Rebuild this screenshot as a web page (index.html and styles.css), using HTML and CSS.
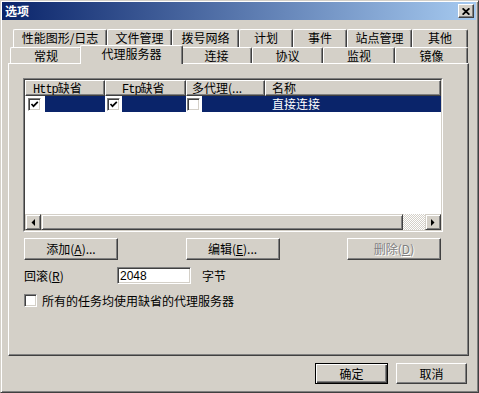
FILE: index.html
```html
<!DOCTYPE html>
<html lang="zh-CN">
<head>
    <meta charset="UTF-8">
    <title>选项</title>
    <link rel="stylesheet" href="styles.css">
</head>
<body>
    <div class="window">
        <div class="titlebar">
            <span class="title">选项</span>
            <span class="close-btn">
                <svg width="8" height="7" viewBox="0 0 8 7"><path d="M0.6 0.3 L7.4 6.7 M7.4 0.3 L0.6 6.7" stroke="#000" stroke-width="1.8"/></svg>
            </span>
        </div>

        <div class="tabs">
            <div class="tab-row back">
                <div class="tab w94">性能图形/日志</div>
                <div class="tab w65">文件管理</div>
                <div class="tab w67">拨号网络</div>
                <div class="tab w54">计划</div>
                <div class="tab w54">事件</div>
                <div class="tab w65">站点管理</div>
                <div class="tab w56">其他</div>
            </div>
            <div class="tab-row front">
                <div class="tab w72">常规</div>
                <div class="tab active">代理服务器</div>
                <div class="tab w71">连接</div>
                <div class="tab w71">协议</div>
                <div class="tab w72">监视</div>
                <div class="tab w73">镜像</div>
            </div>
        </div>

        <div class="panel">
            <div class="listview">
                <div class="listview-inner">
                    <div class="lv-header">
                        <div class="lv-col c1"><span class="lat">Http</span>缺省</div>
                        <div class="lv-col c2"><span class="lat">Ftp</span>缺省</div>
                        <div class="lv-col c3">多代理(...</div>
                        <div class="lv-col c4">名称</div>
                    </div>
                    <div class="lv-row">
                        <div class="lv-cell c1">
                            <span class="slot s1"><span class="checkbox checked"><svg width="9" height="9" viewBox="0 0 9 9"><polyline points="1.5,4 3.5,6.2 7.8,1.8" fill="none" stroke="#000" stroke-width="1.7"/></svg></span></span>
                            <span class="sel"></span>
                        </div>
                        <div class="lv-cell c2">
                            <span class="slot s2"><span class="checkbox checked"><svg width="9" height="9" viewBox="0 0 9 9"><polyline points="1.5,4 3.5,6.2 7.8,1.8" fill="none" stroke="#000" stroke-width="1.7"/></svg></span></span>
                            <span class="sel"></span>
                        </div>
                        <div class="lv-cell c3">
                            <span class="slot s3"><span class="checkbox"></span></span>
                            <span class="sel"></span>
                        </div>
                        <div class="lv-cell c4">
                            <span class="sel name">直接连接</span>
                        </div>
                    </div>
                    <div class="lv-body"></div>
                    <div class="hscroll">
                        <div class="sb-btn">
                            <svg width="4" height="7" viewBox="0 0 4 7"><polygon points="4,0 4,7 0.5,3.5" fill="#000"/></svg>
                        </div>
                        <div class="sb-thumb"></div>
                        <div class="sb-track"></div>
                        <div class="sb-btn">
                            <svg width="4" height="7" viewBox="0 0 4 7"><polygon points="0,0 0,7 3.5,3.5" fill="#000"/></svg>
                        </div>
                    </div>
                </div>
            </div>

            <div class="btn-row">
                <button class="btn wide">添加(<u>A</u>)...</button>
                <button class="btn wide">编辑(<u>E</u>)...</button>
                <button class="btn wide disabled">删除(<u>D</u>)</button>
            </div>

            <div class="field-row">
                <span class="field-label">回滚(<u>R</u>)</span>
                <input class="field-input" type="text" value="2048">
                <span class="field-unit">字节</span>
            </div>

            <div class="check-row">
                <span class="checkbox"></span>
                <span>所有的任务均使用缺省的代理服务器</span>
            </div>
        </div>

        <div class="footer">
            <button class="btn default">确定</button>
            <button class="btn cancel">取消</button>
        </div>
    </div>
</body>
</html>
```

FILE: styles.css
```css
body {
    margin: 0;
    background: #d4d0c8;
    font-family: "Noto Sans CJK SC", "Noto Sans", sans-serif;
    font-size: 12px;
    color: #000;
}
.window {
    width: 479px;
    height: 393px;
    box-sizing: border-box;
    background: #d4d0c8;
    border: 1px solid;
    border-color: #d4d0c8 #404040 #404040 #d4d0c8;
    box-shadow: inset 1px 1px #fff, inset -1px -1px #808080;
    padding: 1px 2px 0 1px;
    display: flex;
    flex-direction: column;
}
.titlebar {
    height: 18px;
    flex: none;
    display: flex;
    align-items: center;
    justify-content: space-between;
    padding: 0 2px 0 3px;
    background: linear-gradient(to right, #0a246a, #a6caf0);
}
.title {
    color: #fff;
    font-weight: bold;
    line-height: 18px;
}
.close-btn {
    width: 16px;
    height: 14px;
    box-sizing: border-box;
    background: #d4d0c8;
    border: 1px solid;
    border-color: #fff #404040 #404040 #fff;
    box-shadow: inset -1px -1px #808080;
    display: flex;
    align-items: center;
    justify-content: center;
}

/* tabs */
.tabs {
    margin: 9px 0 0 6px;
    flex: none;
}
.tab-row {
    display: flex;
    align-items: flex-start;
}
.tab-row.back {
    height: 18px;
    padding-left: 5px;
}
.tab-row.front {
    height: 16px;
    padding-left: 2px;
}
.tab {
    box-sizing: border-box;
    height: 100%;
    background: #d4d0c8;
    border-top: 1px solid #fff;
    border-left: 1px solid #fff;
    border-right: 1px solid #404040;
    box-shadow: inset -1px 0 #808080;
    border-radius: 2px 2px 0 0;
    text-align: center;
    white-space: nowrap;
    line-height: 15px;
}
.front .tab.active {
    position: relative;
    z-index: 1;
    width: 103px;
    height: 19px;
    margin: -2px -2px 0;
    padding: 1px 0 4px;
    line-height: 13px;
}
.w54 { width: 54px; }
.w56 { width: 56px; }
.w65 { width: 65px; }
.w67 { width: 67px; }
.w71 { width: 71px; }
.w72 { width: 72px; }
.w73 { width: 73px; }
.w94 { width: 94px; }

/* panel */
.panel {
    width: 461px;
    height: 293px;
    flex: none;
    box-sizing: border-box;
    margin-left: 6px;
    border: 1px solid;
    border-color: #fff #404040 #404040 #fff;
    box-shadow: inset -1px -1px #808080;
    padding: 14px 0 0 14px;
}
.listview {
    width: 420px;
    height: 154px;
    box-sizing: border-box;
    border: 1px solid;
    border-color: #808080 #fff #fff #808080;
}
.listview-inner {
    height: 100%;
    box-sizing: border-box;
    border: 1px solid;
    border-color: #404040 #d4d0c8 #d4d0c8 #404040;
    background: #fff;
    display: flex;
    flex-direction: column;
}
.lv-header,
.lv-row {
    display: flex;
    height: 16px;
    flex: none;
}
.lv-col {
    box-sizing: border-box;
    height: 16px;
    background: #d4d0c8;
    border: 1px solid;
    border-color: #fff #404040 #404040 #fff;
    box-shadow: inset -1px -1px #808080;
    line-height: 14px;
    white-space: nowrap;
    overflow: hidden;
}
.lat {
    font-family: "Liberation Mono", monospace;
    letter-spacing: -1px;
}
.c1 { width: 80px; }
.c2 { width: 81px; }
.c3 { width: 79px; }
.c4 { flex: 1; }
.lv-col.c1 { padding-left: 7px; }
.lv-col.c2 { padding-left: 16px; }
.lv-col.c3 { padding-left: 5px; }
.lv-col.c4 { padding-left: 6px; }
.lv-cell {
    display: flex;
    height: 16px;
}
.slot {
    display: flex;
    align-items: center;
    background: #fff;
}
.s1 { width: 20px; padding-left: 3px; box-sizing: border-box; }
.s2 { width: 17px; padding-left: 2px; box-sizing: border-box; }
.s3 { width: 16px; padding-left: 1px; box-sizing: border-box; }
.sel {
    flex: 1;
    background: #0a246a;
}
.sel.name {
    color: #fff;
    padding-left: 7px;
    line-height: 16px;
}
.lv-body {
    flex: 1;
}
.hscroll {
    display: flex;
    height: 16px;
    flex: none;
}
.sb-btn,
.sb-thumb {
    box-sizing: border-box;
    height: 16px;
    background: #d4d0c8;
    border: 1px solid;
    border-color: #d4d0c8 #404040 #404040 #d4d0c8;
    box-shadow: inset 1px 1px #fff, inset -1px -1px #808080;
}
.sb-btn {
    width: 16px;
    display: flex;
    align-items: center;
    justify-content: center;
}
.sb-thumb {
    width: 362px;
}
.sb-track {
    flex: 1;
    background: repeating-conic-gradient(#fff 0 25%, #d4d0c8 0 50%) 0 0 / 2px 2px;
}

/* checkbox */
.checkbox {
    width: 13px;
    height: 13px;
    box-sizing: border-box;
    flex: none;
    background: #fff;
    border: 1px solid;
    border-color: #808080 #fff #fff #808080;
    box-shadow: inset 1px 1px #404040, inset -1px -1px #d4d0c8;
    display: flex;
    align-items: center;
    justify-content: center;
}

/* buttons */
.btn {
    box-sizing: border-box;
    margin: 0;
    padding: 0;
    font-family: inherit;
    font-size: 12px;
    color: #000;
    background: #d4d0c8;
    border: 1px solid;
    border-color: #fff #404040 #404040 #fff;
    box-shadow: inset -1px -1px #808080;
    line-height: 14px;
}
.btn u {
    text-underline-offset: 1px;
}
.btn-row {
    display: flex;
    justify-content: space-between;
    width: 417px;
    margin: 6px 0 0 1px;
}
.btn.wide {
    width: 94px;
    height: 22px;
}
.btn.disabled {
    color: #808080;
    text-shadow: 1px 1px #fff;
}
.field-row {
    display: flex;
    align-items: center;
    height: 17px;
    margin: 7px 0 0 1px;
}
.field-label {
    width: 93px;
}
.field-input {
    width: 74px;
    height: 17px;
    box-sizing: border-box;
    margin: 0;
    padding: 0 0 0 2px;
    font-family: "Liberation Sans", "Noto Sans CJK SC", sans-serif;
    font-size: 12px;
    background: #fff;
    border: 1px solid;
    border-color: #808080 #fff #fff #808080;
    box-shadow: inset 1px 1px #404040, inset -1px -1px #d4d0c8;
    outline: none;
}
.field-unit {
    margin-left: 11px;
}
.check-row {
    display: flex;
    align-items: center;
    gap: 5px;
    height: 13px;
    margin: 10px 0 0 1px;
}
.footer {
    display: flex;
    justify-content: flex-end;
    gap: 8px;
    margin-top: 7px;
    padding-right: 9px;
}
.footer .btn {
    height: 21px;
    width: 71px;
}
.footer .btn.default {
    width: 73px;
    border-color: #000;
    box-shadow: inset 1px 1px #fff, inset -1px -1px #404040, inset -2px -2px #808080;
}
```
